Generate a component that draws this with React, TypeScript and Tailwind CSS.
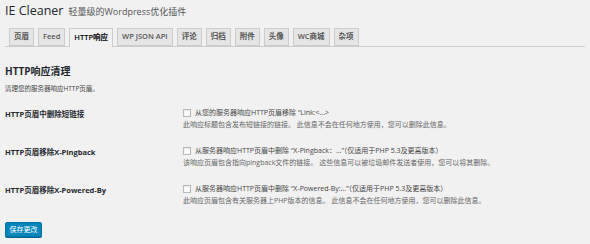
import React from "react";

const font = { fontFamily: '"Open Sans", "Noto Sans CJK SC", sans-serif' };

const tabs = ["页眉", "Feed", "HTTP响应", "WP JSON API", "评论", "归档", "附件", "头像", "WC商城", "杂项"];

function Row({ label, text, desc }: { label: string; text: string; desc: string }) {
  return (
    <div className="flex">
      <div className="w-[178px] shrink-0 pt-[1px] text-[7.5px] font-bold leading-[12px] text-[#23282d]">{label}</div>
      <div className="flex flex-col">
        <div className="flex items-center h-[12px]">
          <span className="w-[8px] h-[8px] border border-[#b4b9be] bg-[#fefefe] shadow-[inset_0_1px_2px_rgba(0,0,0,0.1)] mr-[4px] shrink-0" />
          <span className="text-[7px] leading-[12px] text-[#444]">{text}</span>
        </div>
        <div className="text-[7px] leading-[12px] text-[#666]">{desc}</div>
      </div>
    </div>
  );
}

export default function App() {
  return (
    <div className="w-[590px] h-[244px] bg-[#f1f1f1] px-[5px] overflow-hidden" style={font}>
      <div className="flex items-baseline pt-[2px] h-[22px]">
        <span className="text-[12.5px] leading-[18px] text-[#23282d]">IE Cleaner</span>
        <span className="text-[9px] ml-[5px] text-[#555]">轻量级的Wordpress优化插件</span>
      </div>
      <div className="flex gap-[4px] border-b border-[#ccc] pl-[4px] mt-[6px] h-[19px]">
        {tabs.map((t) => {
          const active = t === "HTTP响应";
          return (
            <div
              key={t}
              className={
                active
                  ? "h-[19px] px-[4px] border border-[#ccc] border-b-0 bg-[#f1f1f1] text-[7.5px] font-semibold text-black flex items-center leading-none"
                  : "h-[18px] px-[4px] border border-[#ccc] bg-[#e5e5e5] text-[7.5px] font-semibold text-[#555] flex items-center leading-none"
              }
            >
              {t}
            </div>
          );
        })}
      </div>
      <div className="mt-[17px] text-[10px] font-bold leading-[14px] text-[#23282d]">HTTP响应清理</div>
      <div className="mt-[6px] text-[6.5px] leading-[10px] text-[#444]">清理您的服务器响应HTTP页眉。</div>
      <div className="mt-[13px] flex flex-col gap-[14px]">
        <Row
          label="HTTP页眉中删除短链接"
          text={"从您的服务器响应HTTP页眉移除 \u201cLink:<...>"}
          desc="此响应标题包含发布短链接的链接。 此信息不会在任何地方使用，您可以删除此信息。"
        />
        <Row
          label="HTTP页眉移除X-Pingback"
          text={"从服务器响应HTTP页眉中删除 \u201cX-Pingback：...\u201d（仅适用于PHP 5.3及更高版本）"}
          desc="该响应页眉包含指向pingback文件的链接。 这些信息可以被垃圾邮件发送者使用，您可以将其删除。"
        />
        <Row
          label="HTTP页眉移除X-Powered-By"
          text={"从服务器响应HTTP页眉中删除 \u201cX-Powered-By:...\u201d（仅适用于PHP 5.3及更高版本）"}
          desc="此响应页眉包含有关服务器上PHP版本的信息。 此信息不会在任何地方使用，您可以删除此信息。"
        />
      </div>
      <button className="mt-[15px] h-[15px] w-[37px] rounded-[2px] bg-[#0085ba] border border-[#0073aa] text-white text-[7px] leading-none shadow-[0_1px_0_#006799]">
        保存更改
      </button>
    </div>
  );
}
